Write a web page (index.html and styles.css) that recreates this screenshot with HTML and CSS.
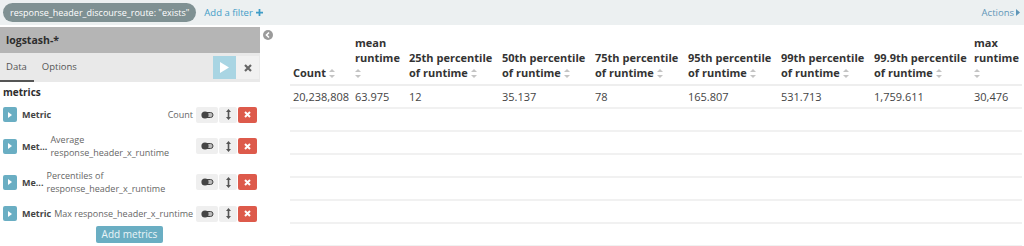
FILE: index.html
```html
<!DOCTYPE html>
<html>
<head>
<meta charset="utf-8">
<link rel="stylesheet" href="styles.css">
</head>
<body>
<div class="filter-bar">
  <span class="pill">response_header_discourse_route: "exists"</span>
  <span class="add-filter">Add a filter <svg class="plus" width="7" height="7" viewBox="0 0 8 8"><path d="M3 0h2v3h3v2H5v3H3V5H0V3h3z" fill="#3f9cc7"/></svg></span>
  <span class="actions">Actions <svg width="4" height="7" viewBox="0 0 4 7"><path d="M0 0l4 3.5L0 7z" fill="#5f96b8"/></svg></span>
</div>
<div class="main">
  <aside class="sidebar">
    <div class="sidebar-title">logstash-*</div>
    <div class="tabs">
      <span class="tab active">Data</span>
      <span class="tab">Options</span>
      <span class="tab-tools">
        <span class="apply"><svg width="9" height="11" viewBox="0 0 9 11"><path d="M0 0l9 5.5L0 11z" fill="#fff"/></svg></span>
        <span class="discard"><svg width="8" height="8" viewBox="0 0 8 8"><path d="M1 1l6 6M7 1L1 7" stroke="#666" stroke-width="2.2"/></svg></span>
      </span>
    </div>
    <div class="section-title">metrics</div>
    <div class="metric">
      <span class="toggle"><svg width="4" height="6" viewBox="0 0 4 6"><path d="M0 0l4 3L0 6z" fill="#fff"/></svg></span>
      <span class="m-label">Metric</span>
      <span class="m-desc right">Count</span>
      <span class="btns">
        <span class="b"><svg width="13" height="8" viewBox="0 0 13 8"><rect x="1.5" y="1.5" width="10.5" height="5" rx="2.5" fill="#bbb" stroke="#444" stroke-width="1"/><circle cx="4" cy="4" r="3.6" fill="#444"/></svg></span>
        <span class="b"><svg width="5" height="11" viewBox="0 0 5 11"><path d="M2.5 0L5 3H3.3v5H5l-2.5 3L0 8h1.7V3H0z" fill="#555"/></svg></span>
        <span class="b red"><svg width="7" height="7" viewBox="0 0 7 7"><path d="M1 1l5 5M6 1L1 6" stroke="#fff" stroke-width="2"/></svg></span>
      </span>
    </div>
    <div class="metric tall">
      <span class="toggle"><svg width="4" height="6" viewBox="0 0 4 6"><path d="M0 0l4 3L0 6z" fill="#fff"/></svg></span>
      <span class="m-label">Met...</span>
      <span class="m-desc">Average<br>response_header_x_runtime</span>
      <span class="btns">
        <span class="b"><svg width="13" height="8" viewBox="0 0 13 8"><rect x="1.5" y="1.5" width="10.5" height="5" rx="2.5" fill="#bbb" stroke="#444" stroke-width="1"/><circle cx="4" cy="4" r="3.6" fill="#444"/></svg></span>
        <span class="b"><svg width="5" height="11" viewBox="0 0 5 11"><path d="M2.5 0L5 3H3.3v5H5l-2.5 3L0 8h1.7V3H0z" fill="#555"/></svg></span>
        <span class="b red"><svg width="7" height="7" viewBox="0 0 7 7"><path d="M1 1l5 5M6 1L1 6" stroke="#fff" stroke-width="2"/></svg></span>
      </span>
    </div>
    <div class="metric tall">
      <span class="toggle"><svg width="4" height="6" viewBox="0 0 4 6"><path d="M0 0l4 3L0 6z" fill="#fff"/></svg></span>
      <span class="m-label">Me...</span>
      <span class="m-desc">Percentiles of<br>response_header_x_runtime</span>
      <span class="btns">
        <span class="b"><svg width="13" height="8" viewBox="0 0 13 8"><rect x="1.5" y="1.5" width="10.5" height="5" rx="2.5" fill="#bbb" stroke="#444" stroke-width="1"/><circle cx="4" cy="4" r="3.6" fill="#444"/></svg></span>
        <span class="b"><svg width="5" height="11" viewBox="0 0 5 11"><path d="M2.5 0L5 3H3.3v5H5l-2.5 3L0 8h1.7V3H0z" fill="#555"/></svg></span>
        <span class="b red"><svg width="7" height="7" viewBox="0 0 7 7"><path d="M1 1l5 5M6 1L1 6" stroke="#fff" stroke-width="2"/></svg></span>
      </span>
    </div>
    <div class="metric">
      <span class="toggle"><svg width="4" height="6" viewBox="0 0 4 6"><path d="M0 0l4 3L0 6z" fill="#fff"/></svg></span>
      <span class="m-label">Metric</span>
      <span class="m-desc">Max response_header_x_runtime</span>
      <span class="btns">
        <span class="b"><svg width="13" height="8" viewBox="0 0 13 8"><rect x="1.5" y="1.5" width="10.5" height="5" rx="2.5" fill="#bbb" stroke="#444" stroke-width="1"/><circle cx="4" cy="4" r="3.6" fill="#444"/></svg></span>
        <span class="b"><svg width="5" height="11" viewBox="0 0 5 11"><path d="M2.5 0L5 3H3.3v5H5l-2.5 3L0 8h1.7V3H0z" fill="#555"/></svg></span>
        <span class="b red"><svg width="7" height="7" viewBox="0 0 7 7"><path d="M1 1l5 5M6 1L1 6" stroke="#fff" stroke-width="2"/></svg></span>
      </span>
    </div>
    <div class="add-row"><span class="add-btn">Add metrics</span></div>
  </aside>
  <section class="vis">
    <svg class="collapse" width="10" height="10" viewBox="0 0 10 10"><circle cx="5" cy="5" r="5" fill="#9b9b9b"/><path d="M6 2.5L3.5 5L6 7.5" stroke="#fff" stroke-width="1.6" fill="none"/></svg>
    <table class="agg">
      <thead>
        <tr>
          <th class="c1">Count <i class="sort"></i></th>
          <th class="c2">mean runtime <i class="sort"></i></th>
          <th class="c3">25th percentile of runtime <i class="sort"></i></th>
          <th class="c3">50th percentile of runtime <i class="sort"></i></th>
          <th class="c3">75th percentile of runtime <i class="sort"></i></th>
          <th class="c3">95th percentile of runtime <i class="sort"></i></th>
          <th class="c3">99th percentile of runtime <i class="sort"></i></th>
          <th class="c4">99.9th percentile of runtime <i class="sort"></i></th>
          <th class="c5">max runtime <i class="sort"></i></th>
        </tr>
      </thead>
      <tbody>
        <tr><td>20,238,808</td><td>63.975</td><td>12</td><td>35.137</td><td>78</td><td>165.807</td><td>531.713</td><td>1,759.611</td><td>30,476</td></tr>
        <tr class="empty"><td></td><td></td><td></td><td></td><td></td><td></td><td></td><td></td><td></td></tr>
        <tr class="empty"><td></td><td></td><td></td><td></td><td></td><td></td><td></td><td></td><td></td></tr>
        <tr class="empty"><td></td><td></td><td></td><td></td><td></td><td></td><td></td><td></td><td></td></tr>
        <tr class="empty"><td></td><td></td><td></td><td></td><td></td><td></td><td></td><td></td><td></td></tr>
        <tr class="empty"><td></td><td></td><td></td><td></td><td></td><td></td><td></td><td></td><td></td></tr>
        <tr class="empty"><td></td><td></td><td></td><td></td><td></td><td></td><td></td><td></td><td></td></tr>
      </tbody>
    </table>
  </section>
</div>
</body>
</html>
```
FILE: styles.css
```css
* { box-sizing: border-box; }
html, body { margin: 0; padding: 0; background: #fff; overflow: hidden; }
body { font-family: "Open Sans", sans-serif; font-size: 11px; color: #444; }

.filter-bar {
  height: 25px;
  background: #ecf0f1;
  display: flex;
  align-items: center;
  padding: 0 4px 0 3px;
}
.pill {
  background: #7f9193;
  color: #fff;
  border-radius: 10px;
  height: 19px;
  line-height: 19px;
  padding: 0 7px;
  font-size: 9px;
}
.add-filter { color: #3f9cc7; margin-left: 8px; font-size: 9.5px; display: flex; align-items: center; gap: 3px; }
.actions { margin-left: auto; color: #5f96b8; font-size: 9.5px; display: flex; align-items: center; gap: 2px; }

.main { display: flex; margin-top: 2px; }
.sidebar { width: 261px; flex: none; }
.sidebar-title {
  background: #b5b5b5;
  height: 26px;
  line-height: 26px;
  padding-left: 6px;
  font-weight: 700;
  font-size: 10.5px;
  color: #2d2d2d;
  margin-right: 1px;
}
.tabs {
  background: #e9e9e9;
  height: 29px;
  display: flex;
  align-items: stretch;
  margin-right: 1px;
}
.tab { padding: 0 7px 0 8px; line-height: 27px; color: #555; font-size: 9.5px; border-bottom: 2px solid transparent; }
.tab.active { padding: 0 7px 0 6px; border-bottom-color: #555; }
.tab-tools { margin-left: auto; display: flex; align-items: center; padding-right: 1px; }
.apply { width: 23px; height: 23px; background: #a9d5e3; display: flex; align-items: center; justify-content: center; }
.discard { width: 23px; height: 23px; background: #f1f1f1; display: flex; align-items: center; justify-content: center; }

.section-title { font-weight: 700; font-size: 10px; color: #2d2d2d; padding: 1px 3px 0; height: 19px; line-height: 18px; }

.metric { display: flex; align-items: center; height: 27px; padding: 0 4px 0 3px; font-size: 9px; }
.metric.tall { height: 36px; }
.toggle {
  width: 14px; height: 15px; border-radius: 2px;
  background: #6aaec3;
  display: flex; align-items: center; justify-content: center;
  flex: none;
}
.m-label { font-weight: 700; color: #444; margin-left: 5px; flex: none; }
.m-desc { color: #666; margin-left: 3px; line-height: 13px; flex: 1; min-width: 0; white-space: nowrap; }
.m-desc.right { text-align: right; }
.btns { display: flex; margin-left: 3px; flex: none; }
.b { width: 18px; height: 16px; background: #efefef; display: flex; align-items: center; justify-content: center; margin-left: 1px; border-radius: 2px; }
.b:first-child { width: 22px; margin-left: 0; }
.b.red { width: 19px; background: #dd5a4b; }
.add-row { display: flex; justify-content: center; margin-top: -1px; padding-right: 2px; }
.add-btn { background: #6aaec3; color: #eaf5f8; font-size: 10px; padding: 0 6px; height: 17px; line-height: 17px; border-radius: 2px; }

.vis { flex: 1; position: relative; padding-left: 29px; padding-top: 4px; }
.collapse { position: absolute; left: 2px; top: 3px; }

.agg { border-collapse: collapse; width: 732px; table-layout: fixed; }
.agg th {
  text-align: left; vertical-align: bottom; font-weight: 700; color: #333;
  line-height: 15px; padding: 4px 2px 4px 3px; border-bottom: 2px solid #eee;
  font-size: 11px;
}
.c1 { width: 62px; } .c2 { width: 54px; } .c3 { width: 93px; } .c4 { width: 100px; } .c5 { width: 51px; }
.sort { display: inline-block; position: relative; width: 6px; height: 9px; vertical-align: -1px; }
.sort::before, .sort::after {
  content: ""; position: absolute; left: 0;
  border-left: 3px solid transparent; border-right: 3px solid transparent;
}
.sort::before { top: 0; border-bottom: 3.5px solid #c4c4c4; }
.sort::after { bottom: 0; border-top: 3.5px solid #c4c4c4; }
.agg td { padding: 0 3px; height: 23px; border-bottom: 2px solid #f1f1f1; color: #444; white-space: nowrap; }
```
